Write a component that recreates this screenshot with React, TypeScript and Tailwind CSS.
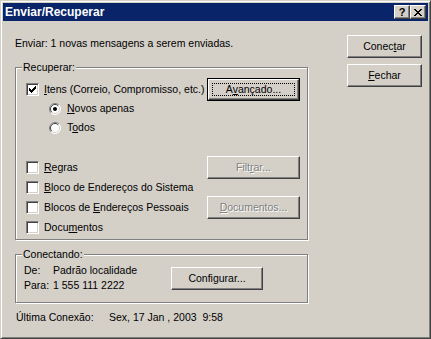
import type { ReactNode } from "react";

// classic win2000 dialog bits

function Btn({
  children,
  className = "w-[75px]",
  disabled = false,
}: {
  children: ReactNode;
  className?: string;
  disabled?: boolean;
}) {
  return (
    <div
      className={`flex h-[23px] shrink-0 items-center justify-center border border-t-white border-l-white border-r-[#404040] border-b-[#404040] bg-[#d4d0c8] shadow-[inset_-1px_-1px_0_#808080] ${
        disabled ? "text-[#808080] [text-shadow:1px_1px_0_#fff]" : "text-black"
      } ${className}`}
    >
      <span>{children}</span>
    </div>
  );
}

function DefaultBtn({ children }: { children: ReactNode }) {
  return (
    <div className="h-[23px] w-[93px] shrink-0 border border-black">
      <div className="relative flex h-full w-full items-center justify-center border border-t-white border-l-white border-r-[#404040] border-b-[#404040] bg-[#d4d0c8] shadow-[inset_-1px_-1px_0_#808080]">
        <div className="absolute inset-[3px] border border-dotted border-black" />
        <span>{children}</span>
      </div>
    </div>
  );
}

function Check({ checked = false }: { checked?: boolean }) {
  return (
    <div className="h-[13px] w-[13px] shrink-0 border border-t-[#808080] border-l-[#808080] border-r-white border-b-white bg-white shadow-[inset_1px_1px_0_#404040,inset_-1px_-1px_0_#d4d0c8]">
      {checked && (
        <svg width="11" height="11" viewBox="0 0 11 11">
          <path
            d="M2.5 4.5 L4.5 6.5 L8.5 2.5 M2.5 5.5 L4.5 7.5 L8.5 3.5 M2.5 6.5 L4.5 8.5 L8.5 4.5"
            stroke="#000"
            strokeWidth="1"
            fill="none"
            shapeRendering="crispEdges"
          />
        </svg>
      )}
    </div>
  );
}

function Radio({ checked = false }: { checked?: boolean }) {
  return (
    <svg width="12" height="12" viewBox="0 0 12 12" className="shrink-0">
      <circle cx="6" cy="6" r="5.5" fill="#fff" />
      <path d="M2.1 9.9 A5.5 5.5 0 0 1 9.9 2.1" stroke="#808080" fill="none" />
      <path d="M9.9 2.1 A5.5 5.5 0 0 1 2.1 9.9" stroke="#fff" fill="none" />
      <path d="M2.8 9.2 A4.5 4.5 0 0 1 9.2 2.8" stroke="#404040" fill="none" />
      <path d="M9.2 2.8 A4.5 4.5 0 0 1 2.8 9.2" stroke="#d4d0c8" fill="none" />
      {checked && <circle cx="6" cy="6" r="2" fill="#000" />}
    </svg>
  );
}

function Group({
  label,
  className,
  children,
}: {
  label: string;
  className: string;
  children: ReactNode;
}) {
  return (
    <div
      className={`relative w-[293px] border border-[#808080] shadow-[1px_1px_0_#fff,inset_1px_1px_0_#fff] ${className}`}
    >
      <span className="absolute -top-[7px] left-[6px] bg-[#d4d0c8] px-[1px] leading-[13px]">
        {label}
      </span>
      {children}
    </div>
  );
}

function CheckRow({
  children,
  checked,
  right,
}: {
  children: ReactNode;
  checked?: boolean;
  right?: ReactNode;
}) {
  return (
    <div className="flex h-[20px] items-center justify-between">
      <div className="flex items-center gap-[5px]">
        <Check checked={checked} />
        <span>{children}</span>
      </div>
      {right}
    </div>
  );
}

export default function App() {
  return (
    <div className="h-[339px] w-[431px] border border-t-[#d4d0c8] border-l-[#d4d0c8] border-r-[#404040] border-b-[#404040] bg-[#d4d0c8] p-[2px] font-['Liberation_Sans',Arial,sans-serif] text-[10.5px] leading-[13px] text-black shadow-[inset_1px_1px_0_#fff,inset_-1px_-1px_0_#808080]">
      {/* title bar */}
      <div className="flex h-[18px] items-center justify-between bg-[#0a246a] pl-[2px] pr-[2px]">
        <span className="text-[12px] font-bold text-white">Enviar/Recuperar</span>
        <div className="flex">
          <div className="flex h-[14px] w-[16px] items-center justify-center border border-t-white border-l-white border-r-[#404040] border-b-[#404040] bg-[#d4d0c8] shadow-[inset_-1px_-1px_0_#808080] text-[11px] font-bold leading-none">
            ?
          </div>
          <div className="flex h-[14px] w-[16px] items-center justify-center border border-t-white border-l-white border-r-[#404040] border-b-[#404040] bg-[#d4d0c8] shadow-[inset_-1px_-1px_0_#808080]">
            <svg width="8" height="7" viewBox="0 0 8 7">
              <path
                d="M0 0 L7 7 M1 0 L8 7 M7 0 L0 7 M8 0 L1 7"
                stroke="#000"
                strokeWidth="1"
                shapeRendering="crispEdges"
              />
            </svg>
          </div>
        </div>
      </div>

      <div className="flex pl-[12px]">
        {/* left column */}
        <div className="w-[293px] pt-[16px]">
          <p>Enviar: 1 novas mensagens a serem enviadas.</p>

          <Group label="Recuperar:" className="mt-[17px] pl-[10px] pr-[7px] pt-[11px] pb-[2px]">
            <CheckRow
              checked
              right={
                <DefaultBtn>
                  A<u>v</u>ançado...
                </DefaultBtn>
              }
            >
              <u>I</u>tens (Correio, Compromisso, etc.)
            </CheckRow>
            <div className="flex h-[19px] items-center gap-[6px] pl-[23px]">
              <Radio checked />
              <span>
                <u>N</u>ovos apenas
              </span>
            </div>
            <div className="flex h-[19px] items-center gap-[6px] pl-[23px]">
              <Radio />
              <span>
                T<u>o</u>dos
              </span>
            </div>
            <div className="mt-[20px]">
              <CheckRow
                right={
                  <Btn disabled className="w-[93px]">
                    Filt<u>r</u>ar...
                  </Btn>
                }
              >
                <u>R</u>egras
              </CheckRow>
              <CheckRow>
                <u>B</u>loco de Endereços do Sistema
              </CheckRow>
              <CheckRow
                right={
                  <Btn disabled className="w-[93px]">
                    <u>D</u>ocumentos...
                  </Btn>
                }
              >
                Blocos de <u>E</u>ndereços Pessoais
              </CheckRow>
              <CheckRow>
                Docu<u>m</u>entos
              </CheckRow>
            </div>
          </Group>

          <Group label="Conectando:" className="mt-[14px] pl-[8px] pt-[8px] pb-[9px]">
            <div className="flex items-center">
              <div className="w-[147px]">
                <div className="flex h-[15px] items-center">
                  <span className="w-[29px]">De:</span>
                  <span>Padrão localidade</span>
                </div>
                <div className="flex h-[15px] items-center">
                  <span className="w-[29px]">Para:</span>
                  <span>1 555 111 2222</span>
                </div>
              </div>
              <Btn className="w-[92px]">
                Confi<u>g</u>urar...
              </Btn>
            </div>
          </Group>

          <div className="mt-[8px] flex pl-[1px]">
            <span className="w-[93px]">Última Conexão:</span>
            <span>Sex, 17 Jan , 2003&nbsp;&nbsp;9:58</span>
          </div>
        </div>

        {/* right column */}
        <div className="ml-[39px] flex flex-col gap-[6px] pt-[14px]">
          <Btn>
            Conec<u>t</u>ar
          </Btn>
          <Btn>
            <u>F</u>echar
          </Btn>
        </div>
      </div>
    </div>
  );
}
